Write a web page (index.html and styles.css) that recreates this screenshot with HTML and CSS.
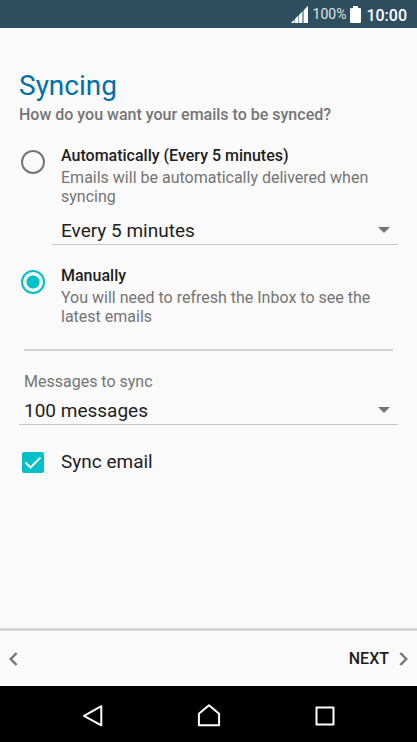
FILE: index.html
```html
<!DOCTYPE html>
<html lang="en">
<head>
<meta charset="utf-8">
<meta name="viewport" content="width=device-width, initial-scale=1">
<title>Syncing</title>
<link rel="stylesheet" href="styles.css">
</head>
<body>
<header class="status">
  <svg class="signal" width="18" height="18" viewBox="0 0 18 18" aria-hidden="true">
    <path fill="#8fa3ae" d="M0 17 17 0V17Z"/>
    <path fill="#fff" d="M0 17 3 14V17ZM4 13 7 10V17H4ZM8 9 11 6V17H8ZM13 4 17 0V17H13Z"/>
  </svg>
  <span class="percent">100%</span>
  <svg class="battery" width="11" height="17" viewBox="0 0 11 17" aria-hidden="true">
    <path fill="#fff" d="M3 0H8V2H10Q11 2 11 3V16Q11 17 10 17H1Q0 17 0 16V3Q0 2 1 2H3Z"/>
  </svg>
  <time class="clock">10:00</time>
</header>
<main class="content">
  <h1 class="title">Syncing</h1>
  <p class="subtitle">How do you want your emails to be synced?</p>
  <div class="option">
    <input class="radio" type="radio" name="mode" id="auto">
    <div>
      <label class="label" for="auto">Automatically (Every 5 minutes)</label>
      <p class="description">Emails will be automatically delivered when syncing</p>
    </div>
  </div>
  <div class="picker picker-nested">
    <select class="select" aria-label="Sync interval"><option>Every 5 minutes</option></select>
    <svg class="arrow" width="12" height="6" viewBox="0 0 12 6" aria-hidden="true"><path fill="#757575" d="M0 0H12L6 6Z"/></svg>
  </div>
  <div class="option">
    <input class="radio" type="radio" name="mode" id="manual" checked>
    <div>
      <label class="label" for="manual">Manually</label>
      <p class="description">You will need to refresh the Inbox to see the latest emails</p>
    </div>
  </div>
  <hr class="divider">
  <label class="field-label" for="count">Messages to sync</label>
  <div class="picker">
    <select class="select" id="count"><option>100 messages</option></select>
    <svg class="arrow" width="12" height="6" viewBox="0 0 12 6" aria-hidden="true"><path fill="#757575" d="M0 0H12L6 6Z"/></svg>
  </div>
  <div class="check-row">
    <span class="check">
      <input class="checkbox" type="checkbox" id="email" checked>
      <svg class="tick" width="22" height="21" viewBox="0 0 22 21" aria-hidden="true"><path fill="none" stroke="#fff" stroke-width="2" d="M3.5 10.5 8.5 15.5 18.5 5.5"/></svg>
    </span>
    <label class="check-label" for="email">Sync email</label>
  </div>
</main>
<footer class="actions">
  <button class="action" type="button" aria-label="Back">
    <svg width="9" height="14" viewBox="0 0 9 14" aria-hidden="true"><path fill="none" stroke="#757575" stroke-width="2.4" d="M7.6 1 1.7 7 7.6 13"/></svg>
  </button>
  <button class="action" type="button">NEXT
    <svg width="9" height="14" viewBox="0 0 9 14" aria-hidden="true"><path fill="none" stroke="#757575" stroke-width="2.4" d="M1.4 1 7.3 7 1.4 13"/></svg>
  </button>
</footer>
<nav class="system">
  <button class="key" type="button" aria-label="Back">
    <svg width="24" height="24" viewBox="0 0 24 24"><path d="M20.3 2.2V21.3L3 11.8Z"/></svg>
  </button>
  <button class="key" type="button" aria-label="Home">
    <svg width="24" height="24" viewBox="0 0 24 24"><path d="M1.9 21.3V9.8L12 1.3 22.1 9.8V21.3Z"/></svg>
  </button>
  <button class="key" type="button" aria-label="Recent apps">
    <svg width="24" height="24" viewBox="0 0 24 24"><path d="M3.5 3.5H20.5V20.5H3.5Z"/></svg>
  </button>
</nav>
</body>
</html>
```
FILE: styles.css
```css
* {
  box-sizing: border-box;
}

body {
  margin: 0;
  min-height: 100vh;
  display: flex;
  flex-direction: column;
  background: #fafafa;
  color: #1e1e1e;
  font-family: Roboto, "Liberation Sans", sans-serif;
  font-size: 16px;
}

p,
h1 {
  margin: 0;
}

button,
select {
  border: 0;
  background: none;
  color: inherit;
  font-family: inherit;
}

svg {
  display: block;
  flex: none;
}

.status {
  display: flex;
  align-items: center;
  justify-content: flex-end;
  height: 28px;
  padding: 0 10px;
  background: #2f4f60;
  color: #fff;
}

.signal {
  margin-top: 2px;
}

.percent {
  margin: 0 4px 0 4px;
  color: #dde4e8;
  font-size: 14px;
}

.clock {
  margin: 2px 0 0 5px;
  font-size: 16px;
  font-weight: 500;
}

.content {
  flex: 1;
  padding: 41px 19px 24px;
}

.title {
  color: #0070a8;
  font-size: 28px;
  font-weight: 400;
  line-height: 34px;
}

.subtitle {
  margin: 2px 0 19px;
  color: #757575;
  font-weight: 500;
  line-height: 20px;
}

.option {
  display: flex;
  gap: 16px;
  padding-left: 2px;
}

.radio {
  appearance: none;
  flex: none;
  width: 24px;
  height: 24px;
  margin: 6px 0 0;
  border: 2px solid #757575;
  border-radius: 50%;
}

.radio:checked {
  border-color: #00c0ca;
  background: radial-gradient(circle, #00c0ca 0 6px, transparent 7px);
}

.label {
  display: block;
  font-weight: 500;
  line-height: 24px;
}

.description {
  color: #757575;
  line-height: 19px;
}

.picker {
  display: grid;
  align-items: center;
  height: 29px;
  border-bottom: 1px solid #c6c6c6;
}

.picker-nested {
  margin: 10px 0 19px 33px;
}

.picker-nested .select {
  padding-left: 9px;
}

.select {
  grid-area: 1 / 1;
  appearance: none;
  width: 100%;
  height: 28px;
  padding: 0 32px 0 5px;
  font-size: 19px;
}

.arrow {
  grid-area: 1 / 1;
  justify-self: end;
  margin-right: 8px;
  pointer-events: none;
}

.divider {
  height: 2px;
  margin: 23px 5px 21px;
  border: 0;
  background: #d4d4d4;
}

.field-label {
  display: block;
  margin: 0 5px 4px;
  color: #757575;
  line-height: 20px;
}

.check-row {
  display: flex;
  align-items: center;
  gap: 17px;
  margin-top: 25px;
  padding-left: 3px;
}

.check {
  display: grid;
}

.checkbox {
  appearance: none;
  grid-area: 1 / 1;
  width: 22px;
  height: 21px;
  margin: 0;
  border-radius: 2px;
}

.checkbox:checked {
  background: #00c0ca;
}

.tick {
  grid-area: 1 / 1;
  pointer-events: none;
}

.check-label {
  font-size: 19px;
  line-height: 24px;
}

.actions {
  display: flex;
  justify-content: space-between;
  height: 58px;
  border-top: 3px solid #d6d6d6;
}

.action {
  display: flex;
  align-items: center;
  gap: 10px;
  padding: 0 9px;
  font-size: 16px;
  font-weight: 500;
}

.system {
  display: flex;
  justify-content: center;
  gap: 92px;
  height: 56px;
  background: #000;
}

.key {
  display: flex;
  align-items: center;
  padding: 4px 0 0;
}

.key path {
  fill: none;
  stroke: #fff;
  stroke-width: 2;
  stroke-linejoin: round;
}
```
